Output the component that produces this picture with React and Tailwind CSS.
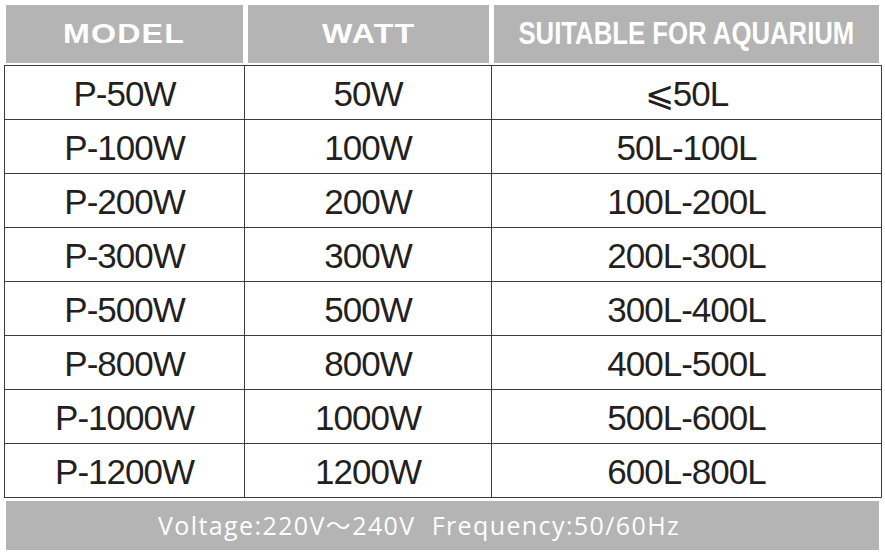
import React from 'react';

const rows = [
  ['P-50W', '50W', '⩽50L'],
  ['P-100W', '100W', '50L-100L'],
  ['P-200W', '200W', '100L-200L'],
  ['P-300W', '300W', '200L-300L'],
  ['P-500W', '500W', '300L-400L'],
  ['P-800W', '800W', '400L-500L'],
  ['P-1000W', '1000W', '500L-600L'],
  ['P-1200W', '1200W', '600L-800L'],
];

const App = () => {
  return (
    <div className="w-[885px] h-[556px] bg-white overflow-hidden">
      {/* Header */}
      <div className="flex gap-[5px] ml-[6px] mt-[5px] h-[58px] text-white font-bold font-['Liberation_Sans',Arial,sans-serif]">
        <div className="w-[237px] bg-[#b4b4b5] flex items-center justify-center">
          <span className="inline-block text-[28px] tracking-[1px] scale-x-[1.15]">MODEL</span>
        </div>
        <div className="w-[241px] bg-[#b4b4b5] flex items-center justify-center">
          <span className="inline-block text-[28px] tracking-[1px] scale-x-[1.15]">WATT</span>
        </div>
        <div className="w-[385px] bg-[#b4b4b5] flex items-center justify-center">
          <span className="inline-block text-[31px] scale-x-[0.83] whitespace-nowrap">SUITABLE FOR AQUARIUM</span>
        </div>
      </div>

      {/* Table */}
      <div className="mt-[2px] ml-[4px] w-[878px] border-t border-l border-r border-[#3a3a3a] text-[#231f20] font-['Liberation_Sans',Arial,sans-serif] text-[35px] tracking-[-1px]">
        {rows.map((row) => (
          <div key={row[0]} className="flex h-[54px] border-b border-[#3a3a3a]">
            <div className="w-[240px] border-r border-[#3a3a3a] flex items-center justify-center pt-[4px]">
              {row[0]}
            </div>
            <div className="w-[247px] border-r border-[#3a3a3a] flex items-center justify-center pt-[4px]">
              {row[1]}
            </div>
            <div className="flex-1 flex items-center justify-center pt-[4px]">
              {row[2]}
            </div>
          </div>
        ))}
      </div>

      {/* Footer */}
      <div className="mt-[3px] ml-[6px] w-[873px] h-[49px] bg-[#b4b4b5] flex items-center gap-[16px] pl-[152px] text-white text-[25px] tracking-[1.4px] font-['Open_Sans','Noto_Sans_CJK_SC',sans-serif] whitespace-nowrap">
        <span>Voltage:220V～240V</span>
        <span>Frequency:50/60Hz</span>
      </div>
    </div>
  );
};

export default App;
